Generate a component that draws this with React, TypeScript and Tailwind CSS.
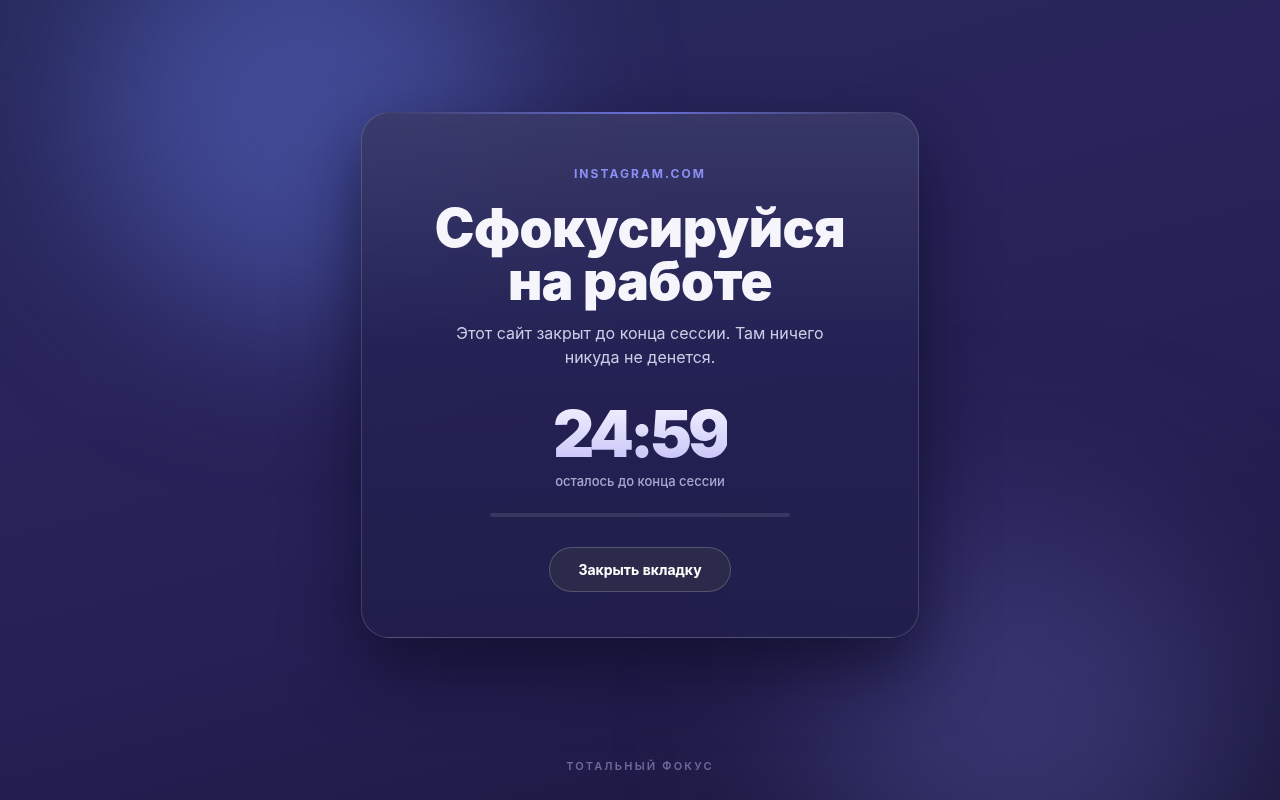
export default function App() {
  return (
    <div className="relative flex h-screen w-full flex-col overflow-hidden bg-[linear-gradient(165deg,#272a5c_0%,#29245b_35%,#251f53_65%,#1a183c_100%)] font-['Inter','Noto_Sans',sans-serif]">
      {/* glow blobs */}
      <div className="pointer-events-none absolute left-[90px] top-[-100px] h-[420px] w-[420px] rounded-full bg-[rgba(74,86,168,0.75)] blur-[80px]" />
      <div className="pointer-events-none absolute left-[810px] top-[520px] h-[400px] w-[420px] rounded-full bg-[rgba(72,68,138,0.6)] blur-[90px]" />

      <main className="relative flex flex-1 items-center justify-center">
        <div className="relative flex w-[558px] flex-col items-center rounded-[28px] border border-white/15 bg-[linear-gradient(180deg,rgba(58,58,104,0.88)_0%,rgba(36,34,84,0.92)_45%,rgba(32,30,74,0.94)_100%)] px-10 pb-[45px] pt-[53px] text-center shadow-[0_30px_70px_rgba(12,10,36,0.7)] backdrop-blur-xl">
          <div className="pointer-events-none absolute left-6 right-6 top-[-1px] h-[2px] bg-gradient-to-r from-transparent via-[#6a70d8] to-transparent" />
          <div className="text-[12px] font-bold leading-4 tracking-[0.17em] text-[#8b8ff5]">INSTAGRAM.COM</div>
          <h1 className="mt-5 text-[53px] font-black leading-[53px] tracking-[-0.01em] text-[#f5f5fb]">
            Сфокусируйся
            <br />
            на работе
          </h1>
          <p className="mt-[13px] max-w-[380px] text-[16px] leading-6 text-[#cdcbe6]">
            Этот сайт закрыт до конца сессии. Там ничего никуда не денется.
          </p>
          <div className="mt-[33px] bg-gradient-to-b from-[#f2f2fd] to-[#c6c2f8] bg-clip-text text-[64px] font-black leading-[64px] tracking-[-0.065em] text-transparent">
            24:59
          </div>
          <div className="mt-[5px] text-[13px] font-medium leading-5 text-[#aaa7cf]">осталось до конца сессии</div>
          <div className="mt-[22px] h-[4px] w-[300px] rounded-full bg-white/10" />
          <button className="mt-[30px] h-[45px] rounded-full border border-white/20 bg-[#2b2a4a] px-[28px] text-[14px] font-bold text-white">
            Закрыть вкладку
          </button>
        </div>
      </main>

      <footer className="relative pb-[26px] pt-2 text-center text-[11px] font-semibold leading-4 tracking-[0.2em] text-[#6c699b]">
        ТОТАЛЬНЫЙ ФОКУС
      </footer>
    </div>
  );
}
